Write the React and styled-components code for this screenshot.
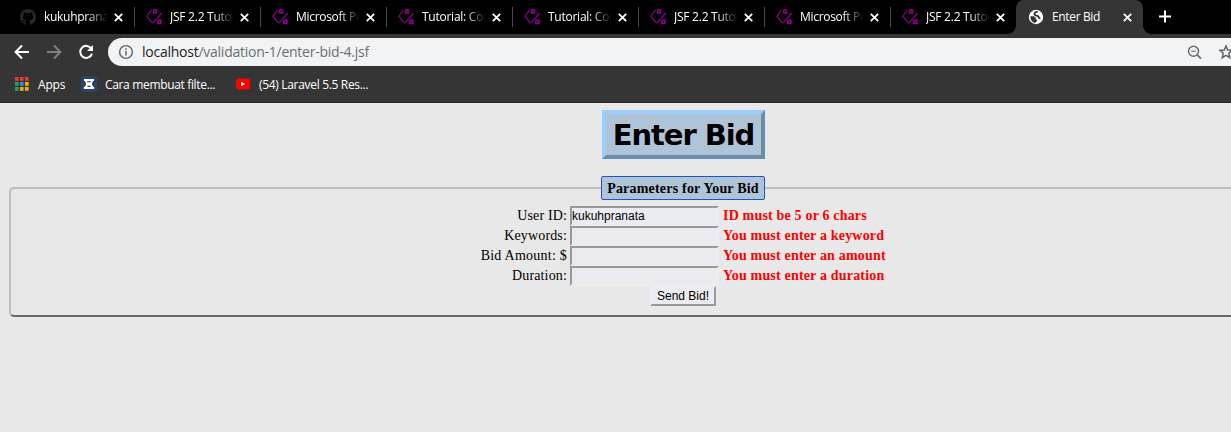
import React from "react";
import styled, { createGlobalStyle } from "styled-components";

const GlobalStyle = createGlobalStyle`
  *, *::before, *::after { box-sizing: border-box; }
  html, body { margin: 0; background: #e8e8e8; overflow: hidden; }
`;

const Window = styled.div`
  width: 100%;
  height: 432px;
  overflow: hidden;
  background: #e8e8e8;
`;

const Chrome = styled.header`
  font: 12px "Open Sans", "Noto Sans", sans-serif;
  color: #fff;
  background: #353535;
  height: 103px;
  border-bottom: 1px solid #252525;
`;

const TabStrip = styled.div`
  display: flex;
  height: 34px;
  padding-left: 8px;
  background: #000;
`;

const Tab = styled.div`
  position: relative;
  display: flex;
  align-items: center;
  flex: none;
  width: ${(p) => (p.$active ? 127 : 126)}px;
  height: 34px;
  padding: 0 11px 0 12px;
  background: ${(p) => (p.$active ? "#353535" : "transparent")};
  border-radius: 8px 8px 0 0;

  &::before, &::after {
    content: "";
    display: ${(p) => (p.$active ? "block" : "none")};
    position: absolute;
    bottom: 0;
    width: 8px;
    height: 8px;
  }
  &::before { left: -8px; background: radial-gradient(circle at 0 0, transparent 7.5px, #353535 8px); }
  &::after { right: -8px; background: radial-gradient(circle at 100% 0, transparent 7.5px, #353535 8px); }
`;

const TabDivider = styled.span`
  position: absolute;
  right: -1px;
  top: 7px;
  width: 1px;
  height: 20px;
  background: #4b4b4b;
`;

const TabTitle = styled.span`
  width: 63px;
  margin-left: 8px;
  overflow: hidden;
  white-space: nowrap;
  line-height: 18px;
  letter-spacing: ${(p) => p.$spacing}px;
  ${(p) => !p.$active && "mask-image: linear-gradient(90deg, #000 43px, transparent 64px);"}
`;

const CloseSvg = styled.svg`
  margin-left: auto;
`;

const NewTab = styled.svg`
  margin: 10px 0 0 16px;
`;

const Toolbar = styled.div`
  display: flex;
  height: 36px;
  align-items: center;
  padding-left: 14px;
`;

const NavIcon = styled.svg`
  flex: none;
  width: 16px;
  height: 16px;
  margin-right: 16px;
`;

const AddressBar = styled.div`
  display: flex;
  align-items: center;
  flex: none;
  width: 1180px;
  height: 28px;
  margin-left: -2px;
  padding-left: 10px;
  border-radius: 14px;
  background: #f1f3f4;
  color: #202124;
`;

const Url = styled.span`
  width: 1045px;
  margin-left: 8px;
  font-size: 14px;
  line-height: 20px;
  letter-spacing: -0.25px;
  white-space: nowrap;
`;

const UrlPath = styled.span`
  color: #6b6f73;
`;

const StarSvg = styled.svg`
  margin-left: 16px;
`;

const Bookmarks = styled.div`
  display: flex;
  align-items: center;
  height: 28px;
  padding-left: 15px;
`;

const Bookmark = styled.div`
  display: flex;
  align-items: center;
  gap: ${(p) => p.$gap}px;
  width: ${(p) => p.$width}px;
  white-space: nowrap;
  letter-spacing: ${(p) => p.$spacing || 0}px;
`;

const Page = styled.main`
  width: 1348px;
  margin-left: 9px;
  padding-top: 7px;
  font: 14px "Liberation Serif", serif;
  color: #000;
`;

const Title = styled.h1`
  width: 163px;
  height: 49px;
  margin: 0 auto 17px 593px;
  border: 4px solid;
  border-color: #9ccdff #6a8dae #6a8dae #9ccdff;
  background: #b0c4d8;
  font: bold 29px/43px "DejaVu Sans", Verdana, sans-serif;
  letter-spacing: -1.1px;
  text-align: center;
  white-space: nowrap;
`;

const BidForm = styled.fieldset`
  display: block;
  width: 1348px;
  height: 141px;
  margin: 0;
  padding: 6px 0 0;
  border: 2px solid;
  border-color: #bebebe #696969 #696969 #bebebe;
  border-radius: 5px;
`;

const Legend = styled.legend`
  width: 164px;
  height: 24px;
  margin: 0 auto;
  padding: 0;
  border: 1px solid #1e56c0;
  border-radius: 2px;
  background: #b0c4d8;
  font-weight: bold;
  line-height: 23px;
  letter-spacing: 0.2px;
  text-align: center;
  white-space: nowrap;
`;

const Row = styled.div`
  display: grid;
  grid-template-columns: 556px 150px 300px;
  column-gap: 3px;
  height: 20px;
  line-height: 20px;
  white-space: nowrap;
`;

const Label = styled.label`
  text-align: right;
  letter-spacing: ${(p) => p.$spacing}px;
`;

const Field = styled.input`
  width: 149px;
  height: 20px;
  padding: 0 0 1px;
  border: 2px solid;
  border-color: #999 #ededf0 #ededf0 #999;
  background: #ebecf1;
  color: #000;
  font: 12px "Liberation Sans", Arial, sans-serif;
  outline: none;
`;

const ErrorText = styled.span`
  color: #f00;
  font-weight: bold;
  letter-spacing: 0.18px;
`;

const Submit = styled.button`
  display: block;
  width: 66px;
  height: 20px;
  margin-left: 639px;
  padding: 0;
  border: 2px solid;
  border-color: #eeeef1 #999 #999 #eeeef1;
  background: #ebecf1;
  color: #000;
  font: 12px/16px "Liberation Sans", Arial, sans-serif;
`;

const Close = () => (
  <CloseSvg width="9" height="9" viewBox="0 0 9 9" stroke="#fff" strokeWidth="1.8">
    <path d="M.8.8l7.4 7.4M8.2.8L.8 8.2" />
  </CloseSvg>
);

const GithubIcon = () => (
  <svg width="16" height="16" viewBox="0 0 16 16" fill="#24292e">
    <path d="M8 0C3.58 0 0 3.58 0 8c0 3.54 2.29 6.53 5.47 7.59.4.07.55-.17.55-.38 0-.19-.01-.82-.01-1.49-2.01.37-2.53-.49-2.69-.94-.09-.23-.48-.94-.82-1.13-.28-.15-.68-.52-.01-.53.63-.01 1.08.58 1.23.82.72 1.21 1.87.87 2.33.66.07-.52.28-.87.51-1.07-1.78-.2-3.64-.89-3.64-3.95 0-.87.31-1.59.82-2.15-.08-.2-.36-1.02.08-2.12 0 0 .67-.21 2.2.82a7.6 7.6 0 014 0c1.53-1.04 2.2-.82 2.2-.82.44 1.1.16 1.92.08 2.12.51.56.82 1.27.82 2.15 0 3.07-1.87 3.75-3.65 3.95.29.25.54.73.54 1.48 0 1.07-.01 1.93-.01 2.2 0 .21.15.46.55.38A8.01 8.01 0 0016 8c0-4.42-3.58-8-8-8z" />
  </svg>
);

const CodeIcon = () => (
  <svg width="16" height="16" viewBox="0 0 16 16" fill="none" stroke="#8b008b">
    <path d="M5.7 1L.8 7.2 6.6 14.4" strokeWidth="1.2" />
    <path d="M15.8 4L7 13.8" strokeWidth="1.2" />
    <path d="M7.7 1.1h2.8v2.8H7.7zM11.9 11.4h3v3h-3z" strokeWidth="1.6" />
  </svg>
);

const GlobeIcon = () => (
  <svg width="16" height="16" viewBox="0 0 16 16">
    <circle cx="8" cy="8" r="7.2" fill="#fff" />
    <path d="M9.8 2.6C7 3 6.3 4 6.6 5.4c.2 1.3 3.4 1.1 4 2.4.3.8-.1 1.5 1.8 1.6" fill="none" stroke="#353535" strokeWidth="1.9" />
    <path d="M2.3 7.2h3.6l1.8 1.2v2l1.5.2-.4 1.6-1.4 1.6c-3 0-5.1-3.1-5.1-6.6z" fill="#353535" />
  </svg>
);

const tabs = [
  ["kukuhpranata", -0.3],
  ["JSF 2.2 Tutorial", -0.25],
  ["Microsoft Power", -0.3],
  ["Tutorial: Core", -0.25],
  ["Tutorial: Core", -0.25],
  ["JSF 2.2 Tutorial", -0.25],
  ["Microsoft Power", -0.3],
  ["JSF 2.2 Tutorial", -0.25],
];

const appColors = ["#ea3a32", "#ea3a32", "#ea3a32", "#28a256", "#3487f4", "#f6ad08", "#28a256", "#f6ad08", "#f6ad08"];

const rows = [
  ["User ID:", "kukuhpranata", "ID must be 5 or 6 chars", 0.15],
  ["Keywords:", "", "You must enter a keyword", 0.15],
  ["Bid Amount: $", "", "You must enter an amount", 0.24],
  ["Duration:", "", "You must enter a duration", 0.15],
];

export default function App() {
  return (
    <Window>
      <GlobalStyle />
      <Chrome>
        <TabStrip>
          {tabs.map(([title, spacing], i) => (
            <Tab key={i}>
              {i === 0 ? <GithubIcon /> : <CodeIcon />}
              <TabTitle $spacing={spacing}>{title}</TabTitle>
              <Close />
              {i < 7 && <TabDivider />}
            </Tab>
          ))}
          <Tab $active>
            <GlobeIcon />
            <TabTitle $active $spacing={-0.35}>Enter Bid</TabTitle>
            <Close />
          </Tab>
          <NewTab width="13" height="13" viewBox="0 0 13 13" stroke="#fff" strokeWidth="2">
            <path d="M6 .5v12M0 6.5h12" />
          </NewTab>
        </TabStrip>
        <Toolbar>
          <NavIcon viewBox="0 0 16 16" fill="none" stroke="#fff" strokeWidth="2">
            <path d="M15 8H2M8 1.5L1.6 8 8 14.5" />
          </NavIcon>
          <NavIcon viewBox="0 0 16 16" fill="none" stroke="#808080" strokeWidth="2">
            <path d="M1 8h13M8 1.5L14.4 8 8 14.5" />
          </NavIcon>
          <NavIcon viewBox="0 0 16 16" fill="none" stroke="#fff" strokeWidth="2">
            <path d="M13.3 4.6A6 6 0 1 0 14 9.6" />
            <path d="M15 1v6H9z" fill="#fff" stroke="none" />
          </NavIcon>
          <AddressBar>
            <svg width="16" height="16" viewBox="0 0 16 16" fill="none" stroke="#5f6368">
              <circle cx="8" cy="8" r="6.4" strokeWidth="1.4" />
              <path d="M8 7v4.5M8 4.3v1.6" strokeWidth="1.5" />
            </svg>
            <Url>localhost<UrlPath>/validation-1/enter-bid-4.jsf</UrlPath></Url>
            <svg width="15" height="15" viewBox="0 0 15 15" fill="none" stroke="#6b6e72">
              <circle cx="6.5" cy="6.2" r="5" strokeWidth="1.5" />
              <path d="M10 9.7l4 4" strokeWidth="1.8" />
              <path d="M4.2 6.2h4.6" strokeWidth="1.1" />
            </svg>
            <StarSvg width="16" height="16" viewBox="0 0 16 16" fill="none" stroke="#5f6368" strokeWidth="1.5">
              <path d="M8 2l1.7 4 4.4.4-3.3 2.9 1 4.3L8 11.3l-3.8 2.3 1-4.3-3.3-2.9 4.4-.4z" />
            </StarSvg>
          </AddressBar>
        </Toolbar>
        <Bookmarks>
          <Bookmark $gap={9} $width={66} $spacing={-0.2}>
            <svg width="14" height="14" viewBox="0 0 14 14">
              {appColors.map((c, i) => (
                <rect key={i} x={(i % 3) * 5} y={Math.floor(i / 3) * 5} width="3.6" height="3.8" fill={c} />
              ))}
            </svg>
            Apps
          </Bookmark>
          <Bookmark $gap={8} $width={154} $spacing={-0.34}>
            <svg width="16" height="16" viewBox="0 0 16 16">
              <path fill="#2b4266" d="M0 0h16v16H0z" />
              <path fill="#fff" d="M3 3h10v2h-1l-1.2 3 1.2 2.8h1.2V13H2.8v-2.2H4L5.2 8 4 5H3z" />
              <path fill="#2b4266" d="M6 5.2h4v1H6zM6.5 9.8h3v1.1h-3z" />
            </svg>
            Cara membuat filte...
          </Bookmark>
          <Bookmark $gap={8} $width={160} $spacing={-0.32}>
            <svg width="16" height="12" viewBox="0 0 16 12">
              <rect x="1" y=".5" width="14" height="11" rx="2.5" fill="#f00" />
              <path fill="#fff" d="M6.2 3.8L10 6l-3.8 2.2z" />
            </svg>
            (54) Laravel 5.5 Res...
          </Bookmark>
        </Bookmarks>
      </Chrome>
      <Page>
        <Title>Enter Bid</Title>
        <BidForm>
          <Legend>Parameters for Your Bid</Legend>
          {rows.map(([label, value, error, spacing]) => (
            <Row key={label}>
              <Label $spacing={spacing}>{label}</Label>
              <Field defaultValue={value} aria-label={label} />
              <ErrorText>{error}</ErrorText>
            </Row>
          ))}
          <Submit type="button">Send Bid!</Submit>
        </BidForm>
      </Page>
    </Window>
  );
}
